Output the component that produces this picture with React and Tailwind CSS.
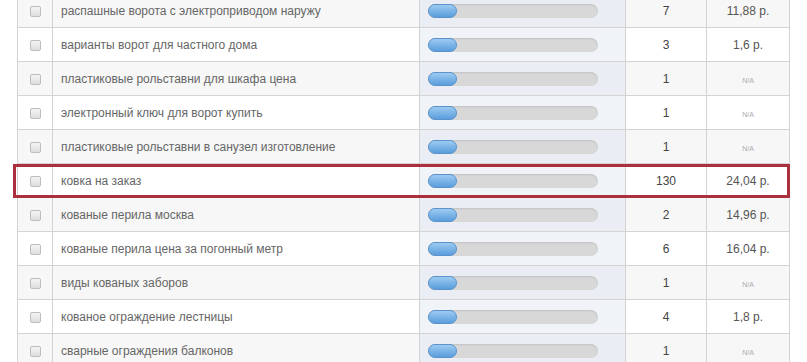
import React from "react";

const rows = [
  { name: "распашные ворота с электроприводом наружу", count: 7, price: "11,88 р." },
  { name: "варианты ворот для частного дома", count: 3, price: "1,6 р." },
  { name: "пластиковые рольставни для шкафа цена", count: 1, price: null },
  { name: "электронный ключ для ворот купить", count: 1, price: null },
  { name: "пластиковые рольставни в санузел изготовление", count: 1, price: null },
  { name: "ковка на заказ", count: 130, price: "24,04 р.", marked: true },
  { name: "кованые перила москва", count: 2, price: "14,96 р." },
  { name: "кованые перила цена за погонный метр", count: 6, price: "16,04 р." },
  { name: "виды кованых заборов", count: 1, price: null },
  { name: "кованое ограждение лестницы", count: 4, price: "1,8 р." },
  { name: "сварные ограждения балконов", count: 1, price: null },
];

const Bar = () => (
  <div className="h-[14px] w-[170px] rounded-full bg-[#d8d8d8] shadow-[inset_0_1px_2px_rgba(0,0,0,0.1)]">
    <div className="h-full w-[29px] rounded-full border border-[#5a93cc] bg-gradient-to-b from-[#9ccbf1] to-[#5a9ddc]" />
  </div>
);

export default function App() {
  return (
    <div className="w-[807px] h-[362px] overflow-hidden bg-white font-['Liberation_Sans',Arial,sans-serif]">
      <div className="relative ml-[17px] mt-[-7px] w-[772px]">
        <table className="w-full border-collapse table-fixed text-[12px] text-[#666]">
          <colgroup>
            <col className="w-[35px]" />
            <col className="w-[367px]" />
            <col className="w-[206px]" />
            <col className="w-[81px]" />
            <col className="w-[83px]" />
          </colgroup>
          <tbody>
            {rows.map((row, i) => (
              <tr
                key={row.name}
                className={`h-[34px] ${i % 2 === 0 ? "bg-[#f7f7f7]" : "bg-white"}`}
              >
                <td className="border border-[#d3d3d3] text-center">
                  <span className="inline-block w-[11px] h-[11px] rounded-[2px] border border-[#bdbdbd] bg-gradient-to-b from-[#f4f4f4] to-[#dedede] align-middle" />
                </td>
                <td className="border border-[#d3d3d3] pl-[8px]">{row.name}</td>
                <td
                  className={`border border-[#d3d3d3] pl-[8px] ${
                    i % 2 === 0 ? "bg-[#eaeef4]" : "bg-[#f0f3f8]"
                  }`}
                >
                  <Bar />
                </td>
                <td className="border border-[#d3d3d3] text-center text-[#444]">{row.count}</td>
                <td className="border border-[#d3d3d3] text-center text-[#555]">
                  {row.price ? (
                    row.price
                  ) : (
                    <span className="text-[7px] text-[#aaa]">N/A</span>
                  )}
                </td>
              </tr>
            ))}
          </tbody>
        </table>
        {/* highlight frame around the marked row */}
        <div className="absolute left-[-4px] top-[171px] w-[777px] h-[34px] border-[3px] border-[#ac2f3d] pointer-events-none" />
      </div>
    </div>
  );
}
